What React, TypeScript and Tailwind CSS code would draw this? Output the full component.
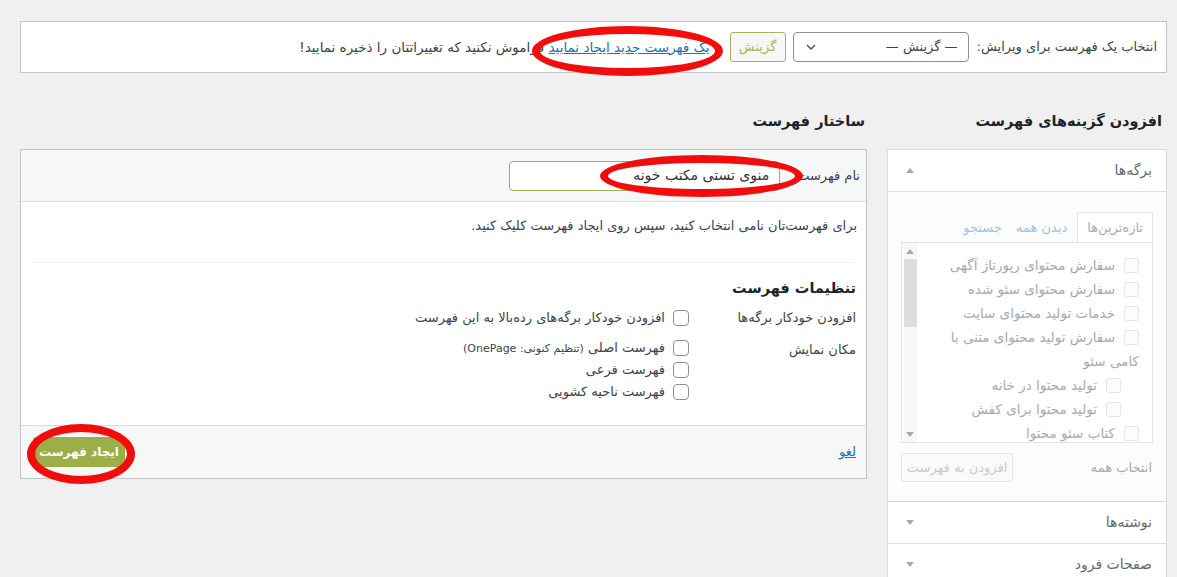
const pageItems = [
  { label: "سفارش محتوای رپورتاژ آگهی", child: false },
  { label: "سفارش محتوای سئو شده", child: false },
  { label: "خدمات تولید محتوای سایت", child: false },
  { label: "سفارش تولید محتوای متنی با", more: "کامی سئو", child: false },
  { label: "تولید محتوا در خانه", child: true },
  { label: "تولید محتوا برای کفش", child: true },
  { label: "کتاب سئو محتوا", child: false },
];

function Box({ faded = false }: { faded?: boolean }) {
  return (
    <span
      className={
        faded
          ? "inline-block w-[15px] h-[15px] shrink-0 rounded-[3px] border border-[#e4e4e6] bg-[#fcfcfc] align-middle"
          : "inline-block w-[16px] h-[16px] shrink-0 rounded-[4px] border border-[#8c8f94] bg-white align-middle"
      }
    />
  );
}

function Triangle({ up = false }: { up?: boolean }) {
  return (
    <svg width="8" height="5" viewBox="0 0 8 5" className="text-[#a7aaad]">
      {up ? <path d="M0 5 L4 0 L8 5 Z" fill="currentColor" /> : <path d="M0 0 L8 0 L4 5 Z" fill="currentColor" />}
    </svg>
  );
}

function Ring({ className }: { className: string }) {
  return <div className={"absolute rounded-[50%] border-[8px] border-[#f20d0d] pointer-events-none " + className} />;
}

export default function App() {
  return (
    <div
      dir="rtl"
      className="relative min-h-[577px] overflow-hidden bg-[#f0f0f1] pt-[21px] pr-[10px] pl-[20px] text-[13px] text-[#3c434a]"
      style={{ fontFamily: "Tahoma, 'DejaVu Sans', sans-serif" }}
    >
      {/* top bar */}
      <div className="h-[52px] border border-[#c3c4c7] bg-white flex items-center pr-[9px] gap-[8px]">
        <span className="whitespace-nowrap">انتخاب یک فهرست برای ویرایش:</span>
        <div className="w-[176px] h-[30px] border border-[#8c8f94] rounded-[4px] bg-white flex items-center justify-between pr-[10px] pl-[12px]">
          <span>— گزینش —</span>
          <svg width="10" height="6" viewBox="0 0 10 6" fill="none" stroke="#50575e" strokeWidth="1.5">
            <path d="M1 1 L5 5 L9 1" />
          </svg>
        </div>
        <div className="w-[56px] h-[30px] border border-[#a5b65a] rounded-[3px] bg-[#f6f7f7] flex items-center justify-center text-[#a5b65a] mr-[-1px]">
          گزینش
        </div>
        <span className="whitespace-nowrap text-[13.5px]">
          یا{" "}
          <a className="text-[#2271b1] underline">یک فهرست جدید ایجاد نمایید</a> فراموش نکنید که تغییراتتان را ذخیره نمایید!
        </span>
      </div>

      <div className="flex gap-[20px] mt-[35px]">
        {/* sidebar */}
        <div className="w-[280px] shrink-0">
          <h2 className="h-[26px] leading-[26px] text-[14.5px] font-bold text-[#1d2327] pr-[5px]">افزودن گزینه‌های فهرست</h2>
          <div className="mt-[15px] border border-[#dcdcde] bg-white">
            <div className="h-[42px] border-b border-[#dcdcde] flex items-center justify-between pr-[14px] pl-[18px] text-[14px] text-[#646970]">
              <span>برگه‌ها</span>
              <Triangle up />
            </div>
            <div className="bg-[#fdfdfd] pt-[21px] pb-[19px] pr-[13px] pl-[13px]">
              <div className="flex items-end h-[29px] text-[13px]">
                <div className="h-[30px] px-[9px] border border-b-0 border-[#e4e4e6] bg-white flex items-center text-[#a7aaad] relative z-10">
                  تازه‌ترین‌ها
                </div>
                <div className="h-[29px] px-[10px] flex items-center text-[#9cc3e6]">دیدن همه</div>
                <div className="h-[29px] px-[4px] flex items-center text-[#9cc3e6]">جستجو</div>
              </div>
              <div className="h-[201px] border border-[#e4e4e6] bg-white flex overflow-hidden">
                <div className="flex-1 pt-[10px] pr-[13px] text-[#a7aaad] text-[13.5px] leading-[24px]">
                  {pageItems.map((it) => (
                    <div key={it.label} className={it.child ? "pr-[18px]" : ""}>
                      <div className="flex items-center gap-[9px]">
                        <Box faded />
                        <span className="whitespace-nowrap">{it.label}</span>
                      </div>
                      {it.more && <div>{it.more}</div>}
                    </div>
                  ))}
                </div>
                <div className="w-[14px] ml-[1px] bg-[#f7f7f7] flex flex-col items-center">
                  <div className="h-[16px] flex items-center"><Triangle up /></div>
                  <div className="w-[13px] h-[68px] bg-[#dddddd]" />
                  <div className="flex-1" />
                  <div className="h-[16px] flex items-center"><Triangle /></div>
                </div>
              </div>
              <div className="mt-[10px] flex items-center justify-between">
                <span className="text-[#a7aaad] pr-[1px]">انتخاب همه</span>
                <div className="w-[112px] h-[29px] border border-[#e4e4e6] rounded-[3px] bg-[#fafafa] flex items-center justify-center text-[#c8cacc]">
                  افزودن به فهرست
                </div>
              </div>
            </div>
            <div className="h-[42px] border-t border-[#dcdcde] flex items-center justify-between pr-[14px] pl-[18px] text-[14px] text-[#646970]">
              <span>نوشته‌ها</span>
              <Triangle />
            </div>
            <div className="h-[42px] border-t border-[#dcdcde] flex items-center justify-between pr-[14px] pl-[18px] text-[14px] text-[#646970]">
              <span>صفحات فرود</span>
              <Triangle />
            </div>
          </div>
        </div>

        {/* main */}
        <div className="flex-1">
          <h2 className="h-[26px] leading-[26px] text-[14.5px] font-bold text-[#1d2327] pr-[2px]">ساختار فهرست</h2>
          <div className="mt-[15px] border border-[#c3c4c7] bg-white">
            <div className="h-[52px] bg-[#f6f7f7] border-b border-[#dcdcde] flex items-center pr-[6px] gap-[17px]">
              <span className="whitespace-nowrap">نام فهرست</span>
              <div className="w-[271px] h-[30px] border border-[#9fb14e] rounded-[4px] bg-white flex items-center pr-[10px] text-[14px] text-[#2c3338]">
                منوی تستی مکتب خونه
              </div>
            </div>
            <div className="pt-[15px] pb-[22px]">
              <p className="pr-[9px] leading-[18px]">برای فهرست‌تان نامی انتخاب کنید، سپس روی ایجاد فهرست کلیک کنید.</p>
              <div className="mx-[11px] mt-[27px] h-px bg-[#f0f0f1]" />
              <h3 className="mt-[14px] pr-[10px] leading-[22px] text-[14.5px] font-bold text-[#1d2327]">تنظیمات فهرست</h3>
              <div className="mt-[10px] flex pr-[10px]">
                <div className="w-[167px] shrink-0 leading-[18px]">افزودن خودکار برگه‌ها</div>
                <div className="flex items-center gap-[8px] leading-[18px]">
                  <Box />
                  <span>افزودن خودکار برگه‌های رده‌بالا به این فهرست</span>
                </div>
              </div>
              <div className="mt-[10px] flex pr-[10px]">
                <div className="w-[167px] shrink-0 leading-[22px] pt-[2px]">مکان نمایش</div>
                <div className="flex flex-col">
                  <div className="h-[22px] flex items-center gap-[8px]">
                    <Box />
                    <span>
                      فهرست اصلی <span className="text-[11px]">(تنظیم کنونی: OnePage)</span>
                    </span>
                  </div>
                  <div className="h-[22px] flex items-center gap-[8px]">
                    <Box />
                    <span>فهرست فرعی</span>
                  </div>
                  <div className="h-[22px] flex items-center gap-[8px]">
                    <Box />
                    <span>فهرست ناحیه کشویی</span>
                  </div>
                </div>
              </div>
            </div>
            <div className="h-[53px] bg-[#f6f7f7] border-t border-[#dcdcde] flex items-center justify-between pr-[10px] pl-[12px]">
              <a className="text-[#2271b1] underline">لغو</a>
              <div className="w-[92px] h-[30px] rounded-[3px] bg-[#9bae48] flex items-center justify-center text-white font-bold text-[12px]">
                ایجاد فهرست
              </div>
            </div>
          </div>
        </div>
      </div>

      <Ring className="left-[532px] top-[26px] w-[191px] h-[50px]" />
      <Ring className="left-[600px] top-[155px] w-[203px] h-[42px]" />
      <Ring className="left-[27px] top-[424px] w-[108px] h-[60px]" />
    </div>
  );
}
